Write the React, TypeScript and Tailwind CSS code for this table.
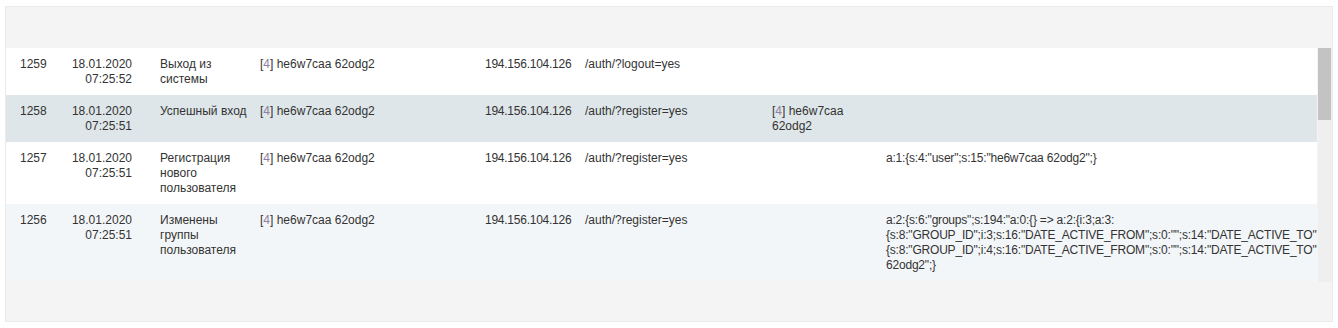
import React from "react";

type Entry = {
  id: number;
  date: string;
  time: string;
  type: string;
  ip: string;
  url: string;
  user2?: boolean;
  desc?: string[];
  highlight?: boolean;
};

const entries: Entry[] = [
  { id: 1259, date: "18.01.2020", time: "07:25:52", type: "Выход из системы", ip: "194.156.104.126", url: "/auth/?logout=yes" },
  { id: 1258, date: "18.01.2020", time: "07:25:51", type: "Успешный вход", ip: "194.156.104.126", url: "/auth/?register=yes", user2: true, highlight: true },
  {
    id: 1257,
    date: "18.01.2020",
    time: "07:25:51",
    type: "Регистрация нового пользователя",
    ip: "194.156.104.126",
    url: "/auth/?register=yes",
    desc: ['a:1:{s:4:"user";s:15:"he6w7caa 62odg2";}'],
  },
  {
    id: 1256,
    date: "18.01.2020",
    time: "07:25:51",
    type: "Изменены группы пользователя",
    ip: "194.156.104.126",
    url: "/auth/?register=yes",
    desc: [
      'a:2:{s:6:"groups";s:194:"a:0:{} => a:2:{i:3;a:3:',
      '{s:8:"GROUP_ID";i:3;s:16:"DATE_ACTIVE_FROM";s:0:"";s:14:"DATE_ACTIVE_TO";s:0:"";}i:4;a:3:',
      '{s:8:"GROUP_ID";i:4;s:16:"DATE_ACTIVE_FROM";s:0:"";s:14:"DATE_ACTIVE_TO";s:0:"";}}";s:4:"user";s:15:"he6w7caa',
      '62odg2";}',
    ],
  },
];

function UserLink() {
  return (
    <span>
      [<span className="text-[#8b80a6]">4</span>] he6w7caa 62odg2
    </span>
  );
}

export default function App() {
  return (
    <div className="bg-white w-[1338px] h-[328px] pt-[6px] pl-[5px] font-['Liberation_Sans',Arial,sans-serif] text-[12px] leading-[15px] text-[#333]">
      <div className="w-[1328px] h-[316px] bg-[#f4f4f4] border border-[#ebebeb] pt-[41px]">
        <div className="h-[234px] flex">
          <div className="flex-1 min-w-0 overflow-hidden">
            {entries.map((e, idx) => (
              <div
                key={e.id}
                className={
                  "flex pt-[9px] pb-[8px] " +
                  (e.highlight ? "bg-[#dee6e9]" : idx % 2 === 1 ? "bg-[#f3f6f8]" : "bg-white")
                }
              >
                <div className="w-[55px] shrink-0 pl-[14px]">{e.id}</div>
                <div className="w-[81px] shrink-0 pr-[10px] text-right">
                  <div>{e.date}</div>
                  <div>{e.time}</div>
                </div>
                <div className="w-[109px] shrink-0 pl-[18px] pr-[1px]">{e.type}</div>
                <div className="w-[225px] shrink-0 pl-[9px]">
                  <UserLink />
                </div>
                <div className="w-[100px] shrink-0 pl-[9px] whitespace-nowrap tracking-[-0.25px]">{e.ip}</div>
                <div className="w-[187px] shrink-0 pl-[9px]">{e.url}</div>
                <div className="w-[114px] shrink-0 pl-[9px] pr-[10px]">{e.user2 && <UserLink />}</div>
                <div className="flex-1 min-w-0 pl-[9px] whitespace-nowrap tracking-[-0.2px]">
                  {e.desc?.map((line, i) => (
                    <div key={i}>{line}</div>
                  ))}
                </div>
              </div>
            ))}
          </div>
          {/* scrollbar */}
          <div className="w-[14px] shrink-0 ml-[1px] bg-[#efefef]">
            <div className="h-[72px] w-[13px] bg-[#c3c3c3]" />
          </div>
        </div>
      </div>
    </div>
  );
}
